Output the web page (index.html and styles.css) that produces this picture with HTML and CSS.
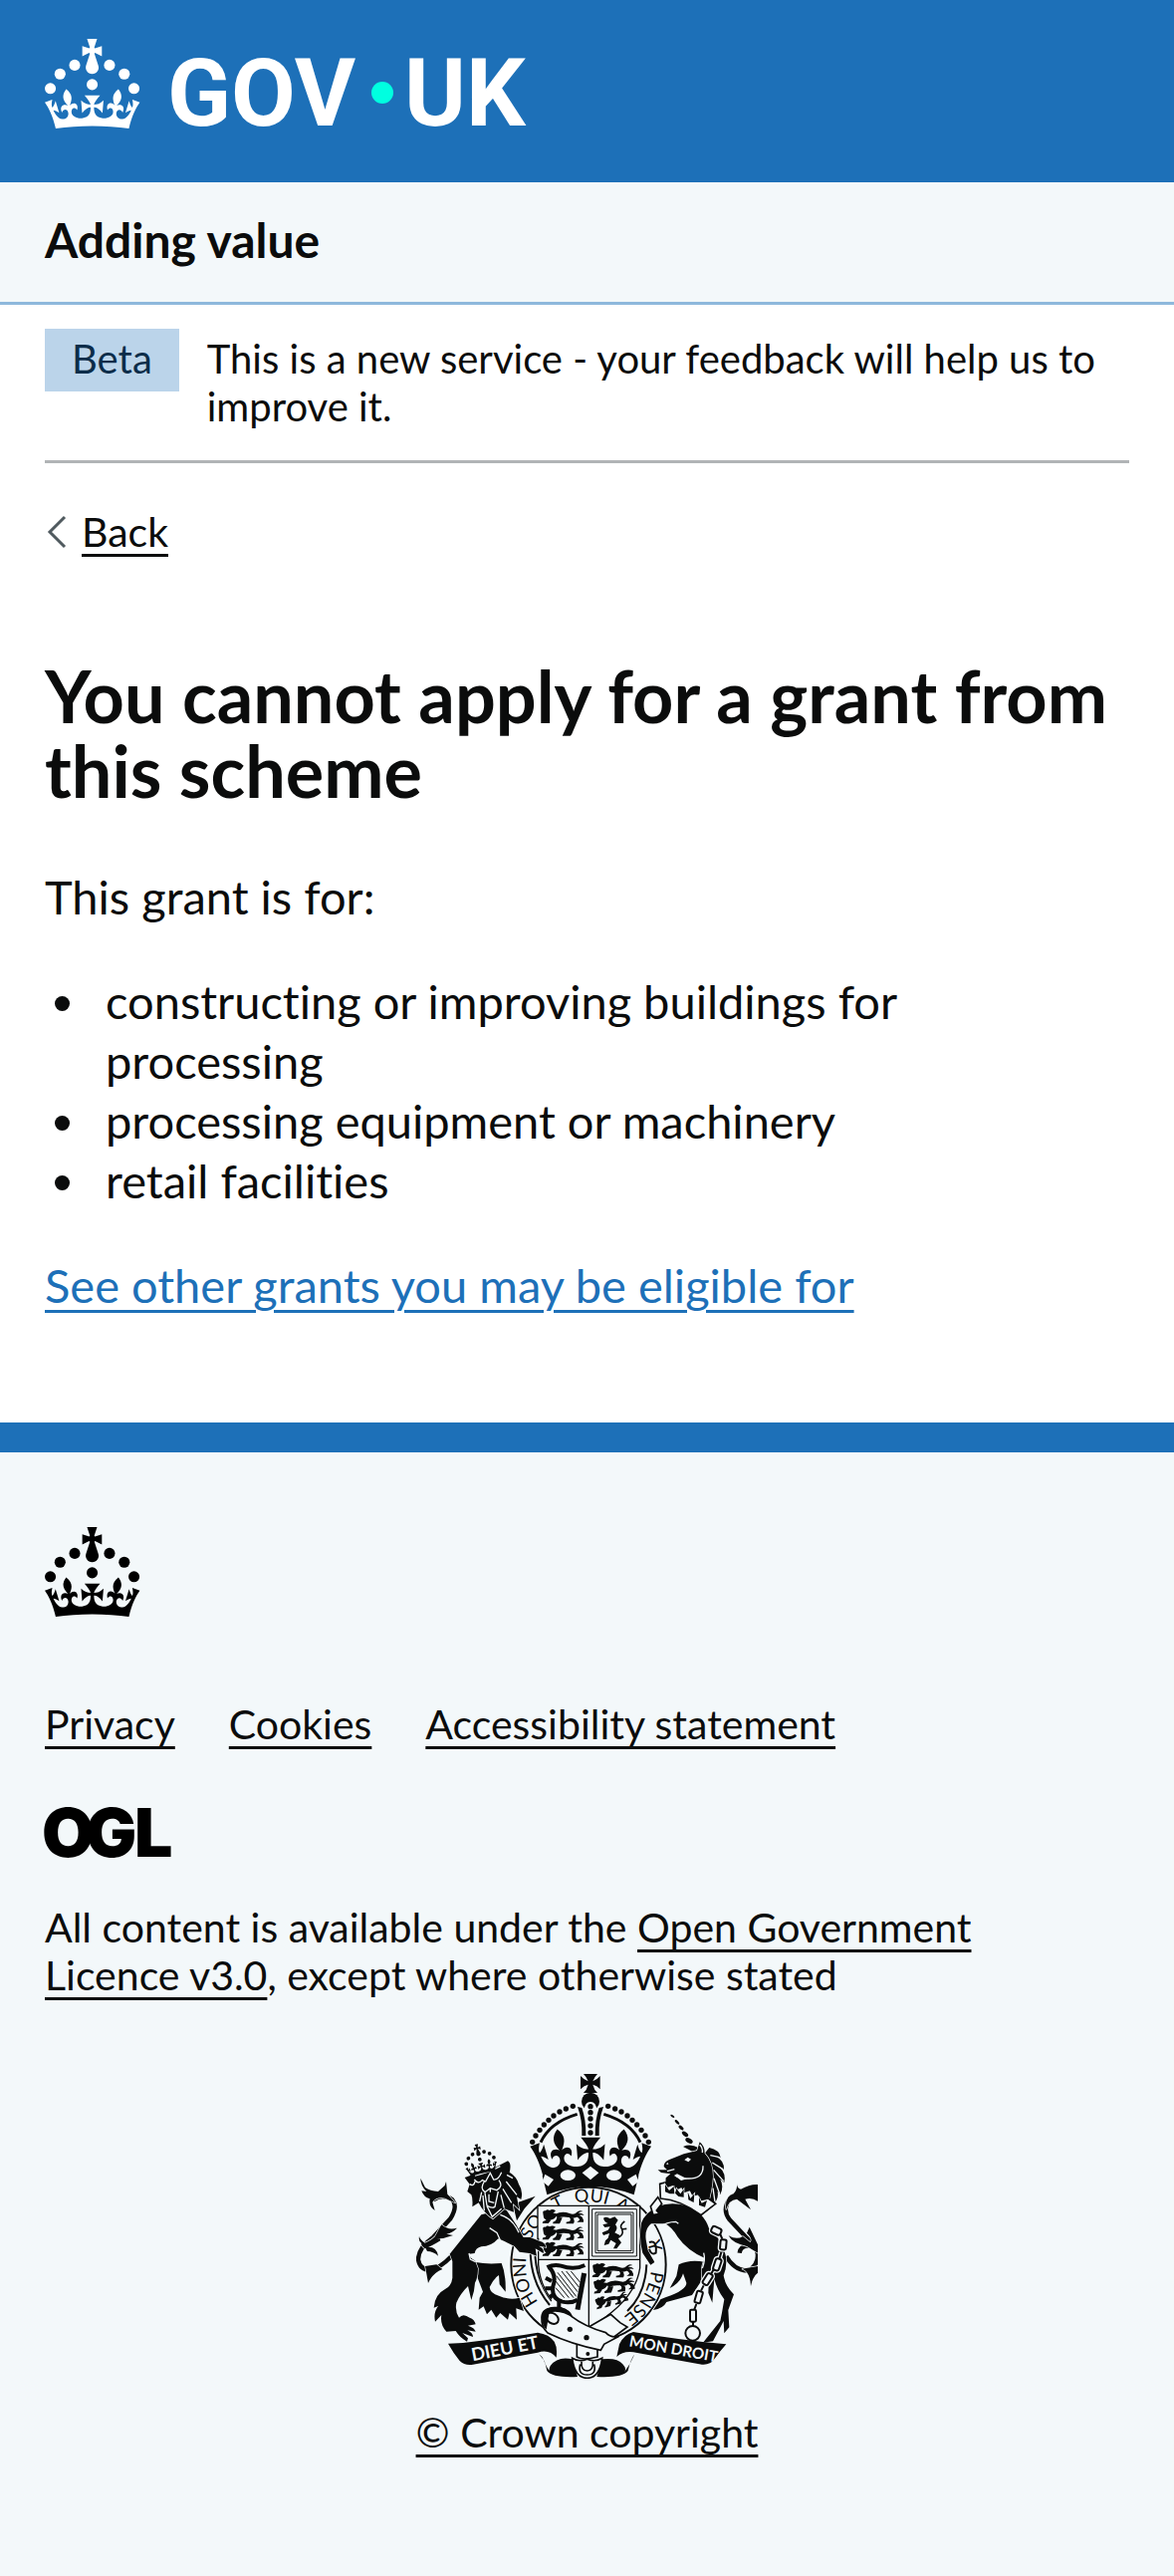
FILE: index.html
```html
<!DOCTYPE html>
<html lang="en">
<head>
<meta charset="utf-8">
<meta name="viewport" content="width=device-width, initial-scale=1">
<title>You cannot apply for a grant from this scheme - Adding value</title>
<link rel="stylesheet" href="styles.css">
</head>
<body>
<svg class="sprite" aria-hidden="true">
  <defs>
    <g id="crown">
      <circle cx="20" cy="17.6" r="3.7"/>
      <circle cx="10.2" cy="23.5" r="3.7"/>
      <circle cx="3.7" cy="33.2" r="3.7"/>
      <circle cx="31.7" cy="30.6" r="3.7"/>
      <circle cx="43.3" cy="17.6" r="3.7"/>
      <circle cx="53.2" cy="23.5" r="3.7"/>
      <circle cx="59.7" cy="33.2" r="3.7"/>
      <path d="M33.1,9.8c.2-.1.3-.3.5-.5l4.6,2.4v-6.8l-4.6,1.5c-.1-.2-.3-.3-.5-.5l1.9-5.9h-6.7l1.9,5.9c-.2.1-.3.3-.5.5l-4.6-1.5v6.8l4.6-2.4c.1.2.3.3.5.5l-2.6,8c-.9,2.8,1.2,5.7,4.1,5.7h0c3,0,5.1-2.9,4.1-5.7l-2.6-8Z"/>
      <use href="#circlet"/>
    </g>
    <path id="circlet" d="M37,37.9s-3.4,3.8-4.1,6.1c2.2,0,4.2-.5,6.4-2.8l-.7,8.5c-2-2.8-4.4-4.1-5.7-3.8.1,3.1.5,6.7,5.8,7.2,3.7.3,6.7-1.5,7-3.8.4-2.6-2-4.3-3.7-1.6-1.4-4.5,2.4-6.1,4.9-3.2-1.9-4.5-1.8-7.7,2.4-10.9,3,4,2.6,7.3-1.2,11.1,2.4-1.3,6.2,0,4,4.6-1.2-2.8-3.7-2.2-4.2.2-.3,1.7.7,3.7,3,4.2,1.9.3,4.7-.9,7-5.9-1.3,0-2.4.7-3.9,1.7l2.4-8c.6,2.3,1.4,3.7,2.2,4.5.6-1.6.5-2.8,0-5.3l5,1.8c-2.6,3.6-5.2,8.7-7.3,17.5-7.4-1.1-15.7-1.7-24.5-1.7h0c-8.8,0-17.1.6-24.5,1.7-2.1-8.9-4.7-13.9-7.3-17.5l5-1.8c-.5,2.5-.6,3.7,0,5.3.8-.8,1.6-2.3,2.2-4.5l2.4,8c-1.5-1-2.6-1.7-3.9-1.7,2.3,5,5.2,6.2,7,5.9,2.3-.4,3.3-2.4,3-4.2-.5-2.4-3-3.1-4.2-.2-2.2-4.6,1.6-6,4-4.6-3.7-3.7-4.2-7.1-1.2-11.1,4.2,3.2,4.3,6.4,2.4,10.9,2.5-2.8,6.3-1.3,4.9,3.2-1.8-2.7-4.1-1-3.7,1.6.3,2.3,3.3,4.1,7,3.8,5.4-.5,5.7-4.2,5.8-7.2-1.3-.2-3.7,1-5.7,3.8l-.7-8.5c2.2,2.3,4.2,2.7,6.4,2.8-.7-2.3-4.1-6.1-4.1-6.1h10.6Z"/>
    <!-- lion passant guardant, three to a quarter -->
    <g id="passant">
      <path d="M2 12Q0 2 10 4Q14-2 22 3Q30-3 40 4L32 12Q42 10 44 18Q36 32 22 32Q8 34 4 24Z"/>
      <path d="M38 14Q60 4 82 12Q96 18 104 8Q112 0 122 6Q112 6 108 12Q120 10 126 18Q114 14 108 20Q96 30 80 24Q60 20 46 26Z"/>
      <path d="M14 28Q10 36 2 36L0 42H18L26 32ZM44 24Q42 36 32 38V43H52Q56 36 60 25ZM80 22Q88 30 82 36L72 38V43H94Q98 34 94 26ZM98 20Q112 24 112 32L104 38H124V32Q122 22 112 18Z"/>
    </g>
    <g id="links">
      <rect x="-15" y="-10" width="30" height="20" rx="7" transform="translate(238 373) rotate(25)"/>
      <rect x="-9" y="-15" width="18" height="30" rx="5" transform="translate(259 415) rotate(5)"/>
      <rect x="-9" y="-18" width="18" height="36" rx="6" transform="translate(241 475) rotate(18)"/>
      <rect x="-9" y="-18" width="18" height="36" rx="6" transform="translate(212 519) rotate(32)"/>
      <rect x="-9" y="-18" width="18" height="36" rx="4" transform="translate(185 573) rotate(16)"/>
      <rect x="-9" y="-18" width="18" height="36" rx="4" transform="translate(168 629)"/>
      <path d="M250 384L256 398M253 438L248 456M230 490L222 504M200 538L192 554M178 594L172 610M168 648V660"/>
      <circle cx="167" cy="682" r="22"/>
    </g>
    <path id="motto-ring" d="M573 829A189 189 0 0 1 573 451A189 189 0 0 1 573 829"/>
    <path id="motto-left" d="M224 931L440 889"/>
    <path id="motto-right" d="M694 886L960 934"/>
  </defs>
</svg>

<header class="header">
  <div class="container">
    <a class="logo" href="#" aria-label="GOV.UK">
      <svg viewBox="0 0 490 90" width="490" height="90">
        <use href="#crown" transform="scale(1.5)"/>
        <text class="logo-text" x="123" y="87">GOV</text>
        <circle class="logo-dot" cx="339" cy="54" r="11"/>
        <text class="logo-text" x="361" y="87">UK</text>
      </svg>
    </a>
  </div>
</header>

<nav class="service" aria-label="Service">
  <div class="container"><a class="service-name" href="#">Adding value</a></div>
</nav>

<div class="container">
  <div class="phase">
    <strong class="tag">Beta</strong>
    <span class="phase-text">This is a new service - your feedback will help us to improve it.</span>
  </div>
  <div class="back">
    <svg class="chevron" viewBox="0 0 22 34" width="22" height="34" aria-hidden="true"><path d="M20 2L5 17L20 32"/></svg>
    <a class="link" href="#">Back</a>
  </div>
  <main class="main">
    <h1>You cannot apply for a grant from this scheme</h1>
    <p>This grant is for:</p>
    <ul class="list">
      <li>constructing or improving buildings for processing</li>
      <li>processing equipment or machinery</li>
      <li>retail facilities</li>
    </ul>
    <p><a class="link link-blue" href="#">See other grants you may be eligible for</a></p>
  </main>
</div>

<footer class="footer">
  <div class="container">
    <svg class="footer-crown" viewBox="0 0 96 90" width="96" height="90" aria-hidden="true"><use href="#crown" transform="scale(1.5)"/></svg>
    <ul class="footer-links">
      <li><a class="link" href="#">Privacy</a></li>
      <li><a class="link" href="#">Cookies</a></li>
      <li><a class="link" href="#">Accessibility statement</a></li>
    </ul>
    <svg class="ogl" viewBox="0 0 123 50" width="123" height="50" role="img" aria-label="Open Government Licence">
      <text class="ogl-text" y="49"><tspan x="-3">O</tspan><tspan x="41">G</tspan><tspan x="90">L</tspan></text>
    </svg>
    <p class="licence">All content is available under the <a class="link" href="#">Open Government Licence v3.0</a>, except where otherwise stated</p>
    <div class="copyright">
      <svg class="crest" viewBox="54 63 1029 921" width="343" height="307" aria-hidden="true">
        <!-- garter -->
        <g class="line">
          <circle cx="573" cy="640" r="233" stroke-width="6"/>
          <path stroke-width="6" d="M398 590Q396 690 456 762M412 590Q410 680 462 750M748 640Q744 730 690 780"/>
        </g>
        <g class="ring-text">
          <text><textPath href="#motto-ring" startOffset="246">HONI</textPath></text>
          <text><textPath href="#motto-ring" startOffset="408">SO</textPath></text>
          <text><textPath href="#motto-ring" startOffset="506">T</textPath></text>
          <text><textPath href="#motto-ring" startOffset="602">QUI</textPath></text>
          <text><textPath href="#motto-ring" startOffset="692">A</textPath></text>
          <text><textPath href="#motto-ring" startOffset="838">Y</textPath></text>
          <text><textPath href="#motto-ring" startOffset="992">PENSE</textPath></text>
        </g>
        <!-- shield -->
        <path class="paper" d="M420 463H728V640Q720 760 575 830Q425 760 420 640Z"/>
        <g class="line" stroke-width="4">
          <path d="M420 590V463H728V590M574 463V826M424 625H728M422 560V640Q426 700 462 745M728 590V650Q716 740 600 815"/>
          <path d="M584 473H718V615H584ZM594 483H708V605H594ZM600 489H702V599H600Z" stroke-width="3"/>
        </g>
        <g>
          <use href="#passant" x="434" y="474"/>
          <use href="#passant" x="434" y="523"/>
          <use href="#passant" x="434" y="572"/>
          <use href="#passant" x="584" y="636"/>
          <use href="#passant" transform="translate(586 686) rotate(-5)"/>
          <use href="#passant" transform="translate(590 742) scale(.8) rotate(-14)"/>
          <path d="M618 500Q628 494 638 502L652 496L662 506L654 520Q664 530 652 544L668 552L662 560L672 574L658 592H648L656 576L640 566L634 578L620 582L624 568L632 560L636 546L618 552L614 544L632 536L638 526L622 528L616 520L632 516Q620 512 618 500Z"/>
          <path class="line" stroke-width="5" d="M656 562Q682 552 674 534Q664 522 682 510M672 534L688 532"/>
        </g>
        <!-- harp -->
        <g class="line">
          <path stroke-width="12" d="M448 648Q470 638 490 644Q530 658 562 642M454 648Q478 672 466 706Q460 742 494 752Q520 758 540 746"/>
          <path stroke-width="15" d="M560 666L540 776"/>
          <path stroke-width="12" d="M444 680L462 690M442 712H462M484 752V770M456 738L468 730"/>
          <path stroke-width="3" d="M480 664L536 736M492 660L540 722M506 660L544 708M520 660L548 694M476 674L528 740M474 690L514 740M474 710L500 740"/>
        </g>
        <!-- imperial crown -->
        <path d="M558 66H600Q590 76 586 88Q598 84 608 72V112Q598 100 586 98Q590 114 600 123H558Q568 114 572 98Q560 100 549 112V72Q560 84 572 88Q568 76 558 66Z"/>
        <circle cx="579" cy="149" r="27"/>
        <path class="paper" d="M560 175Q562 150 579 150Q596 150 598 175V252H560Z"/>
        <g>
          <circle cx="579" cy="164" r="8"/><circle cx="579" cy="182" r="8"/><circle cx="579" cy="201" r="8"/><circle cx="579" cy="222" r="8"/><circle cx="579" cy="243" r="8"/>
        </g>
        <g id="arch">
          <path d="M540 165L553 168Q566 205 565 252H553Q555 205 540 165Z"/>
          <path class="line" stroke-width="9" d="M429 272Q456 212 539 187"/>
          <circle cx="404" cy="271" r="8"/><circle cx="414" cy="252" r="8"/><circle cx="426" cy="235" r="8"/><circle cx="439" cy="219" r="8"/><circle cx="453" cy="205" r="8"/><circle cx="468" cy="192" r="8"/><circle cx="486" cy="180" r="8"/><circle cx="505" cy="171" r="8"/><circle cx="526" cy="163" r="8"/>
        </g>
        <use href="#arch" transform="translate(1158 0) scale(-1 1)"/>
        <use href="#circlet" transform="translate(397 40) scale(5.74)"/>
        <path d="M434 372L452 350H706L724 372L710 430Q579 380 448 430Z"/>
        <g class="paper">
          <ellipse cx="511" cy="371" rx="23" ry="16"/><ellipse cx="650" cy="371" rx="23" ry="16"/>
          <path d="M579 344L604 364L579 385L554 364ZM442 368L468 384L452 404L434 390ZM716 368L690 384L706 404L724 390Z"/>
        </g>
        <!-- lion -->
        <g class="beast" transform="translate(45 240)">
          <path class="tail" d="M60 205Q90 185 118 205Q135 225 112 262L60 318Q15 350 15 385Q20 416 50 416Q80 412 115 375"/>
          <path d="M22 140L36 168Q50 178 75 180L95 162L99 150L103 188L128 215L95 200Q70 195 58 212L65 237Q46 225 50 202Q32 198 25 178L40 180Q22 162 22 140ZM85 280Q105 298 132 290Q118 305 100 308L120 312Q90 324 62 322ZM18 315Q20 325 35 335Q60 325 75 305L82 328Q55 345 35 352Q22 342 25 336Q15 330 18 315ZM36 348Q70 342 75 374Q60 360 42 360ZM36 405L45 456Q58 426 88 414L70 400Z"/>
          <path d="M300 218L368 194L335 232L312 268Z"/>
          <path d="M188 393Q222 400 266 396Q280 430 278 482L260 460L258 432Q240 445 230 468Q232 488 258 494Q290 508 320 500L333 540L310 532L312 566L290 546L285 566L262 546L250 560L235 536L222 550L212 526L197 536L200 500L210 482L190 430Z"/>
          <path d="M205 250L110 368L118 390V440Q115 465 95 475Q65 490 62 530L75 525Q60 545 66 572L85 552Q80 580 100 602L128 600Q140 620 162 632L165 622L148 606L180 618Q180 606 163 598L188 602Q185 590 165 584L188 580Q185 565 170 560Q150 545 138 560Q125 540 130 515Q140 490 165 465L175 507Q185 480 186 455Q195 440 195 412L186 388Q172 382 168 368L185 366Q188 350 205 346Q235 346 256 322L275 330L305 345L320 362L350 366L372 374L368 352L392 366Q396 352 378 344L400 348Q398 334 382 330L352 318L332 318L310 280L278 232Z"/>
          <path class="cut" d="M230 290L252 304L262 326M168 366L172 384L188 392M262 250Q300 262 318 304"/>
          <path d="M155 138L178 130Q200 128 250 106L285 88Q297 95 290 122Q312 135 318 158Q332 178 325 204L312 196L319 234L300 216L303 242L275 232L240 262Q212 245 197 214L178 226Q180 200 175 190L163 180L170 158Z"/>
          <path class="cut" d="M170 158Q182 166 186 150M184 144Q196 160 208 146L218 150L232 124L242 144Q256 146 266 122M214 150Q200 172 216 182L232 170L252 176Q272 164 258 146M232 170V182M216 184L222 222Q236 232 246 226L256 180M228 188V210L244 214M206 182L200 210M270 172L296 214M264 190L274 230M280 150L312 190M210 192L214 238M282 130L300 140M222 224L238 256L266 232"/>
          <path class="cut" d="M186 132Q230 122 262 104"/>
          <use href="#crown" transform="translate(143 49) rotate(-13) scale(1.52)"/>
        </g>
        <!-- unicorn -->
        <g class="beast" transform="translate(720 165)">
          <path class="tail" d="M363 262Q310 250 280 275Q254 310 278 340L330 395Q365 425 363 450"/>
          <path class="tail" d="M268 450Q290 490 330 494Q362 486 364 440Q355 420 335 418Q310 420 308 440"/>
          <path d="M300 230Q300 245 312 248Q340 232 363 234V284Q345 272 325 278L342 310L300 278Q275 280 268 310Q262 270 290 262Q302 250 300 230ZM275 388Q300 402 318 390L340 408Q350 400 330 380L338 362L363 415V440L330 420Q285 410 275 388ZM315 488Q340 495 342 540Q348 510 363 500V480Z"/>
          <path d="M205 468Q160 458 125 475L118 510L98 546Q130 530 138 502L148 530Q150 552 85 574L70 580L48 612Q78 608 88 588L165 567L196 520Z"/>
          <path d="M12 350Q24 318 62 300Q100 284 150 298Q200 318 216 366Q245 390 262 432Q275 470 260 508Q265 540 291 565L274 612L277 664L262 682L260 645L248 668L228 706L198 710L250 645L255 620L262 580Q240 550 232 518L226 590L214 560L216 510L200 540Q186 490 204 456Q150 432 122 392Q104 362 84 352L42 352Q22 366 26 400L32 432L52 468L40 476L16 440Q4 400 12 350Z"/>
          <path class="cut" d="M62 364Q90 346 116 346L124 352M200 440Q206 460 196 486"/>
          <path class="line" stroke-width="6" d="M36 408Q60 400 56 440Q42 448 36 428M48 462Q34 470 26 444"/>
          <g><ellipse rx="7" ry="3" transform="translate(106 28) rotate(35)"/><ellipse rx="9" ry="4" transform="translate(120 46) rotate(45)"/><ellipse rx="9" ry="5" transform="translate(132 63) rotate(40)"/><ellipse rx="11" ry="6" transform="translate(144 82) rotate(38)"/><ellipse rx="12" ry="7" transform="translate(156 102) rotate(30)"/></g>
          <path d="M138 120Q160 110 186 124L172 138Q158 130 138 120Z"/>
          <path d="M203 140L217 123Q248 130 251 152L238 150Q262 162 261 188L248 182Q268 200 262 228L250 218Q262 240 250 264L242 254Q246 276 232 290L215 290Z"/>
          <path d="M62 190H90L80 180Q80 166 95 160L140 142L180 132L188 106Q204 118 203 140Q228 165 228 210Q226 250 212 296L84 244L86 214L100 202L72 198Z"/>
          <path class="cut" d="M113 206Q125 216 150 216Q200 218 198 178M220 146L248 152M226 168L258 188M230 190L260 224M231 215L248 262M228 245L234 286M188 114Q198 124 196 138M90 194L112 188"/>
          <path class="cut-fill" d="M112 206L132 222L150 217L120 202ZM142 160L152 152L162 158L154 166ZM86 172L92 168L94 174Z"/>
          <path class="paper edge" d="M68 232L84 228L92 240L108 234L118 248L134 240L142 256L160 250L168 266L184 262L194 280L214 276L236 292L192 326Q130 280 70 276Z"/>
          <path d="M84 234L96 252L110 240L112 262L98 262L84 256ZM118 246L130 262L140 248V272L124 270L114 260ZM152 256L160 276L172 262L170 288L154 280ZM186 272L194 290L210 282L204 302L186 296Z"/>
          <use class="chain-halo" href="#links"/>
          <use class="chain" href="#links"/>
          <path class="paper edge" d="M40 300L62 272L74 292L58 312L66 322L48 326Z"/>
        </g>
        <!-- motto ribbon -->
        <path d="M150 878L195 876Q320 862 420 845Q455 850 470 872Q480 890 476 920Q455 894 420 905L225 941Q200 945 185 930Q165 905 150 878Z"/>
        <path d="M988 880Q850 868 708 843Q680 850 666 880L658 918Q680 897 720 906L915 941Q940 943 952 925Q970 900 988 880Z"/>
        <path d="M424 910Q440 920 448 960Q465 982 540 978L524 925Q480 915 458 945Q450 960 460 965Q445 950 440 930ZM712 910Q700 925 692 960Q675 982 598 978L614 925Q660 920 676 940Q690 955 680 965Q700 940 712 910Z"/>
        <path class="paper edge" d="M524 922Q545 935 569 925Q593 935 614 922Q606 982 569 982Q532 982 524 922Z"/>
        <path class="line" stroke-width="5" d="M548 940Q540 972 569 972Q598 972 590 940M552 932Q550 960 569 960Q588 960 586 932"/>
        <!-- garter buckle and strap -->
        <path class="paper edge" d="M538 875V918Q555 930 600 918V885ZM570 830L640 790L668 815L690 828L650 858L600 862Z"/>
        <path class="paper edge" d="M432 798Q434 772 470 770Q510 770 522 796Q560 826 625 845Q640 862 665 856L620 880L610 898Q520 880 450 846Q430 828 432 798Z"/>
        <path d="M432 790Q440 764 490 768Q520 776 526 800Q490 776 455 784L446 836Q430 822 432 790Z"/>
        <ellipse class="chain" cx="464" cy="802" rx="20" ry="15" transform="rotate(35 464 802)"/>
        <g><circle cx="517" cy="835" r="8"/><circle cx="567" cy="860" r="8"/><circle cx="571" cy="909" r="6"/></g>
        <g class="ribbon-text">
          <text><textPath href="#motto-left">DIEU ET</textPath></text>
          <text class="ribbon-right"><textPath href="#motto-right">MON DROIT</textPath></text>
        </g>
      </svg>
      <a class="link" href="#">© Crown copyright</a>
    </div>
  </div>
</footer>
</body>
</html>
```
FILE: styles.css
```css
* { box-sizing: border-box; }

:root {
  --ink: #0b0c0c;
  --blue: #1d70b8;
  --tint: #f3f8fa;
}

body {
  margin: 0;
  background: #fff;
  color: var(--ink);
  font: 47px/60px Lato, "Open Sans", sans-serif;
  font-variant-ligatures: none;
}

h1, p, ul { margin: 0; padding: 0; }
svg { display: block; }
.sprite { position: absolute; width: 0; height: 0; }
.container { padding: 0 45px; }

.link {
  color: var(--ink);
  text-decoration: underline;
  text-decoration-thickness: 3px;
  text-underline-offset: 7px;
}
.link-blue { color: var(--blue); }

.header {
  padding: 39px 0 54px;
  background: var(--blue);
}
.logo { display: inline-block; vertical-align: top; fill: #fff; }
.logo svg, .ogl { overflow: visible; }
.logo-text { font: 700 94px Roboto, sans-serif; }
.logo-dot { fill: #00ffe0; }

.service {
  padding: 28px 0 32px;
  background: var(--tint);
  border-bottom: 3px solid #8eb8dc;
}
.service-name {
  color: var(--ink);
  font-size: 48px;
  font-weight: 700;
  text-decoration: none;
}

.phase {
  display: flex;
  align-items: flex-start;
  gap: 28px;
  padding: 24px 0 30px;
  border-bottom: 3px solid #b1b4b6;
  font-size: 40px;
  line-height: 48px;
}
.tag {
  padding: 6px 27px 9px;
  background: #bbd4ea;
  color: #0c2d4a;
  font-weight: 400;
}
.phase-text { flex: 1; padding-top: 6px; }

.back {
  display: flex;
  align-items: center;
  gap: 15px;
  padding-top: 45px;
  font-size: 41px;
  line-height: 48px;
}
.chevron {
  fill: none;
  stroke: #505a5f;
  stroke-width: 3;
}

.main { padding: 103px 0 108px; }
.main h1 {
  margin-bottom: 59px;
  font-size: 72px;
  line-height: 75px;
}
.list {
  margin: 45px 0;
  padding: 0 15px 0 10px;
  list-style: none;
}
.list li {
  display: flex;
  gap: 36px;
}
.list li::before {
  content: "";
  flex: none;
  width: 15px;
  height: 15px;
  margin-top: 25px;
  border-radius: 50%;
  background: var(--ink);
}

.footer {
  padding: 75px 0 120px;
  background: var(--tint);
  border-top: 30px solid var(--blue);
  font-size: 41px;
  line-height: 48px;
}
.footer-links {
  display: flex;
  flex-wrap: wrap;
  gap: 24px 54px;
  margin: 84px 0 60px;
  list-style: none;
}
.ogl-text { font: 900 68px Inter, Lato, sans-serif; }
.licence { margin: 46px 0 74px; padding-right: 45px; }

.copyright {
  display: flex;
  flex-direction: column;
  align-items: center;
  gap: 30px;
}
.crest { fill: var(--ink); }
.line { fill: none; stroke: var(--ink); }
.paper { fill: var(--tint); }
.edge { stroke: var(--ink); stroke-width: 5; }
.beast > path:not([class]) {
  stroke: var(--tint);
  stroke-width: 4;
  paint-order: stroke;
}
.tail { fill: none; stroke: var(--ink); stroke-width: 13; }
.cut { fill: none; stroke: var(--tint); stroke-width: 4; }
.cut-fill { fill: var(--tint); }
.chain { fill: none; stroke: var(--ink); stroke-width: 6; }
.chain-halo { fill: var(--tint); stroke: var(--tint); stroke-width: 14; }
.ring-text { font: 400 54px Lato, sans-serif; text-anchor: middle; }
.ribbon-text { fill: var(--tint); font: 700 54px Lato, sans-serif; }
.ribbon-right { font-size: 46px; }
```
